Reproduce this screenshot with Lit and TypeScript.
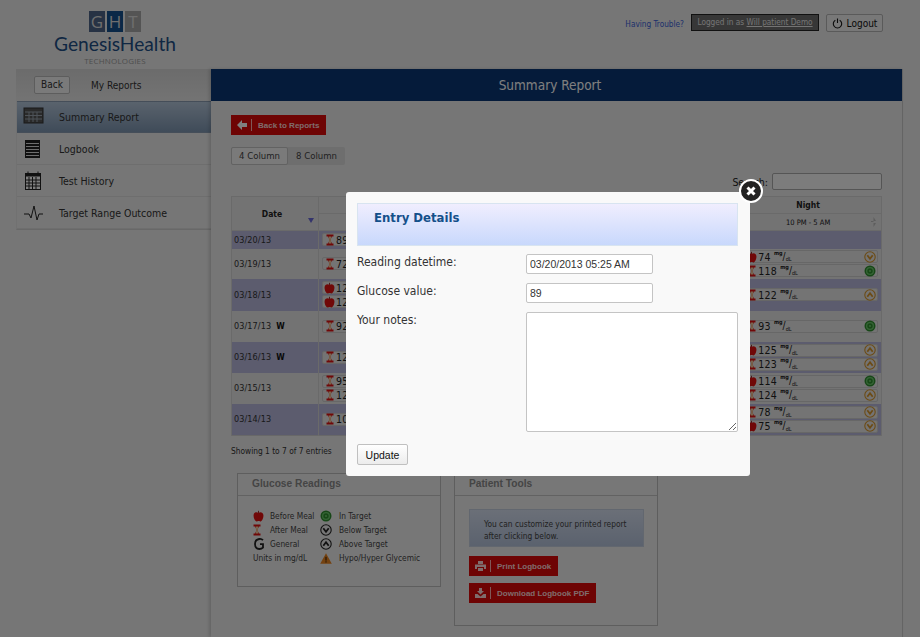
import { LitElement, html, svg, css } from 'lit';
import { customElement } from 'lit/decorators.js';

type Reading = [string, string, string?];
interface Row {
  date: string;
  flag?: string;
  h: number;
  first: Reading[];
  night: Reading[];
}

const ROWS: Row[] = [
  { date: '03/20/13', h: 18, first: [['after', '89']], night: [] },
  { date: '03/19/13', h: 30, first: [['after', '72']], night: [['before', '74', 'below'], ['after', '118', 'in']] },
  { date: '03/18/13', h: 32, first: [['before', '124'], ['before', '121']], night: [['after', '122', 'above']] },
  { date: '03/17/13', flag: 'W', h: 31, first: [['after', '92']], night: [['after', '93', 'in']] },
  { date: '03/16/13', flag: 'W', h: 31, first: [['after', '123']], night: [['before', '125', 'above'], ['after', '123', 'above']] },
  { date: '03/15/13', h: 31, first: [['after', '95'], ['after', '124']], night: [['before', '114', 'in'], ['after', '124', 'above']] },
  { date: '03/14/13', h: 32, first: [['after', '102']], night: [['after', '78', 'below'], ['before', '75', 'below']] },
];

const apple = () => svg`<svg width="11" height="12" viewBox="0 0 11 12"><path d="M5.500 3C4 1.800 1 2 .6 5c-.3 3 1.600 6.500 3.200 6.500.8 0 1.100-.4 1.700-.4s.9.400 1.700.400C8.800 11.500 10.700 8 10.400 5 10 2 7 1.800 5.500 3z" fill="#e01010"/><path d="M5.500 3V.8" stroke="#a03030" stroke-width="1"/></svg>`;
const hourglass = () => svg`<svg width="8" height="12" viewBox="0 0 8 12"><path d="M.5 .5h7v2H6L4.800 5v2L6 9.500h1.500v2h-7v-2H2L3.200 7V5L2 2.500H.5z" fill="#e01010"/><path d="M2.600 2.500h2.800L4.800 5v2l.6 2.500H2.600L3.200 7V5z" fill="#f0cfa0"/></svg>`;
const target = () => svg`<svg width="12" height="12" viewBox="0 0 12 12"><circle cx="6" cy="6" r="5.500" fill="#2f8f2f"/><circle cx="6" cy="6" r="4" fill="#6cc86c"/><circle cx="6" cy="6" r="2.700" fill="#2f8f2f"/><circle cx="6" cy="6" r="1.100" fill="#6cc86c"/></svg>`;
const arrowIcon = (up: boolean, color: string) => svg`<svg width="12" height="12" viewBox="0 0 12 12"><circle cx="6" cy="6" r="5.200" fill="none" stroke=${color} stroke-width="1.100"/><path d=${up ? 'M3.300 7.800L6 4.300l2.700 3.500' : 'M3.300 4.200L6 7.700l2.700-3.500'} fill="none" stroke=${color} stroke-width="1.800"/></svg>`;
const bigG = () => svg`<svg width="12" height="12" viewBox="0 0 12 12"><path d="M10 2.200C8.800 1 7.400.8 6.200 1 3.500 1.400 2 3.400 2 6s1.500 4.800 4.300 5c1.500 0 2.800-.5 3.700-1.300V6.200H7" fill="none" stroke="#222" stroke-width="1.800"/></svg>`;
const warning = () => svg`<svg width="12" height="11" viewBox="0 0 12 11"><path d="M6 .3L11.800 10.700H.2z" fill="#e88420"/><rect x="5.400" y="3.800" width="1.200" height="3.800" fill="#4a2a08"/><rect x="5.400" y="8.300" width="1.200" height="1.200" fill="#4a2a08"/></svg>`;

const statusIcon = (s?: string) =>
  s === 'in' ? target() : s === 'below' ? arrowIcon(false, '#d8962a') : s === 'above' ? arrowIcon(true, '#d8962a') : '';

@customElement('app-root')
export class AppRoot extends LitElement {
  static styles = css`
    :host {
      display: block;
      position: relative;
      width: 920px;
      height: 637px;
      overflow: hidden;
      background: #ececec;
      font-family: 'DejaVu Sans Condensed', 'DejaVu Sans', sans-serif;
      font-stretch: condensed;
      font-size: 10px;
      color: #222;
    }

    .top {
      height: 69px;
      display: flex;
      justify-content: space-between;
    }
    .logo {
      width: 122px;
      margin-left: 54px;
      padding-top: 11px;
      display: flex;
      flex-direction: column;
      align-items: center;
    }
    .letters {
      display: flex;
      gap: 2px;
    }
    .letters span {
      width: 16px;
      height: 21px;
      display: flex;
      align-items: center;
      justify-content: center;
      color: #ddd;
      font: 17px 'Open Sans', sans-serif;
    }
    .letters .g { background: #4f6488; }
    .letters .h { background: #14508f; }
    .letters .t { background: #a9a9a9; }
    .brand {
      font: 19.200px/20px 'Lato', sans-serif;
      color: #214f86;
      margin-top: 2px;
      white-space: nowrap;
    }
    .sub {
      font: 8px/10px 'Open Sans', sans-serif;
      color: #9c9c9c;
      letter-spacing: 0.200px;
      margin-top: 2px;
    }
    .account {
      display: flex;
      align-items: flex-start;
      margin: 14px 37px 0 0;
      font-size: 8.200px;
    }
    .trouble {
      color: #3a62d8;
      margin: 5px 7px 0 0;
    }
    .logged {
      width: 128px;
      height: 17px;
      box-sizing: border-box;
      background: #6e6e6e;
      border: 1px solid #222;
      color: #e8e8e8;
      text-align: center;
      line-height: 15px;
      white-space: nowrap;
    }
    .logout {
      width: 57px;
      height: 18px;
      box-sizing: border-box;
      margin-left: 7px;
      border: 1px solid #b4b4b4;
      border-radius: 2px;
      background: #f0f0f0;
      display: flex;
      align-items: center;
      justify-content: center;
      gap: 4px;
      font-size: 10px;
      color: #111;
    }

    .body {
      display: flex;
      height: 568px;
      padding-left: 16px;
    }
    .side {
      width: 195px;
      flex: none;
    }
    .side-head {
      height: 32px;
      display: flex;
      align-items: center;
      gap: 21px;
      padding-left: 18px;
      box-sizing: border-box;
      background: linear-gradient(#d8d8d8, #e8e8e8);
      font-size: 10px;
      color: #333;
    }
    .back {
      width: 36px;
      height: 18px;
      box-sizing: border-box;
      border: 1px solid #bbb;
      border-radius: 2px;
      background: #f4f4f4;
      text-align: center;
      line-height: 16px;
    }
    .item {
      height: 32px;
      box-sizing: border-box;
      display: flex;
      align-items: center;
      padding: 1px 0 0 6px;
      border-bottom: 1px solid #dcdcdc;
      font-size: 10.500px;
      color: #333;
    }
    .item .ico {
      width: 34px;
      height: 22px;
      margin-right: 2px;
      flex: none;
    }
    .item.active {
      padding-top: 0;
      background: linear-gradient(#b4c6da, #7f97b2);
      border-bottom: 1px solid #8b9db2;
      border-top: 1px solid #8b9db2;
    }
    .side-list {
      border-bottom: 1px solid #d0d0d0;
      border-left: 1px solid #e2e2e2;
    }

    .main {
      width: 692px;
      flex: none;
      box-sizing: border-box;
      border-right: 1px solid #c8c8c8;
      box-shadow: -2px 0 3px rgba(0, 0, 0, 0.15);
    }
    .banner {
      height: 32px;
      box-sizing: border-box;
      padding-right: 13px;
      background: #0a3674;
      color: #fff;
      font-size: 13.500px;
      text-align: center;
      line-height: 32px;
    }
    .content {
      padding: 14px 20px 0 20px;
    }
    .red {
      display: inline-flex;
      align-items: center;
      height: 20px;
      background: #dd0808;
      color: #ffd8d8;
      font: bold 8px 'Liberation Sans', sans-serif;
    }
    .red svg { margin: 0 4px 0 6px; }
    .red i {
      width: 1px;
      height: 12px;
      background: #ffb0b0;
      margin-right: 6px;
    }
    .red b { padding-right: 7px; }
    .seg {
      display: flex;
      margin-top: 12px;
      width: 114px;
      height: 18px;
      background: #dcdcdc;
      border-radius: 2px;
      font-size: 9.500px;
      line-height: 18px;
      color: #444;
    }
    .seg span { flex: 1; text-align: center; }
    .seg .on {
      background: #f4f4f4;
      border: 1px solid #c4c4c4;
      border-radius: 2px;
      box-sizing: border-box;
      line-height: 16px;
      flex: none;
      width: 57px;
    }
    .search {
      display: flex;
      justify-content: flex-end;
      align-items: center;
      gap: 4px;
      margin: 8px 0 6px 0;
      font-size: 10.500px;
    }
    .search input {
      width: 110px;
      height: 17px;
      box-sizing: border-box;
      border: 1px solid #aaa;
      border-radius: 2px;
      background: #f8f8f8;
      margin: 0;
    }

    table {
      width: 651px;
      border-collapse: collapse;
      table-layout: fixed;
      border: 1px solid #d0d0d0;
      font-size: 8.500px;
    }
    th {
      background: #e6e6e6;
      border: 1px solid #d4d4d4;
      height: 16px;
      padding: 0 6px 0 0;
      font-weight: bold;
      position: relative;
    }
    th.time { font-weight: normal; font-size: 7.500px; }
    .sort-down {
      position: absolute;
      right: 4px;
      bottom: 7px;
      width: 0;
      height: 0;
      border: 3px solid transparent;
      border-top: 5px solid #6868d8;
      border-bottom: 0;
    }
    .sort-both {
      position: absolute;
      right: 5px;
      top: 3px;
      width: 5px;
      height: 10px;
      background: linear-gradient(#bbb 45%, transparent 45%, transparent 55%, #bbb 55%);
      clip-path: polygon(50% 0, 100% 40%, 0 40%, 0 60%, 100% 60%, 50% 100%);
    }
    td {
      padding: 0;
      border-left: 1px solid #d4d4d4;
      border-right: 1px solid #d4d4d4;
      vertical-align: middle;
    }
    tr.odd td { background: #b8b8dc; }
    tr.even td { background: #e6e6e6; }
    .date {
      font-size: 9px;
      padding-left: 2px;
      color: #333;
      letter-spacing: 0.100px;
    }
    .date b { margin-left: 5px; font-size: 8.500px; color: #111; }
    .pill {
      display: flex;
      align-items: center;
      height: 13px;
      margin: 1px 3px;
      padding-left: 1px;
      padding-right: 1px;
      background: #e8e8e8;
      border-radius: 2px;
      border: 1px solid #cfcfcf;
      box-sizing: border-box;
      font-size: 10.500px;
      letter-spacing: 0.300px;
      color: #222;
    }
    .pill .kind {
      width: 11px;
      display: flex;
      justify-content: center;
      margin-right: 1px;
    }
    .pill .unit {
      font-size: 6px;
      line-height: 1;
      margin-left: 3px;
      flex: 1;
      display: flex;
      align-items: center;
      letter-spacing: 0;
    }
    .unit sup { align-self: flex-start; margin-top: -1px; font-size: 5.500px; font-weight: bold; }
    .unit em { font-style: normal; font-size: 10px; }
    .unit sub { align-self: flex-end; margin-bottom: -1px; font-size: 5.500px; }

    .foot {
      margin: 10px 0 17px;
      font-size: 8.300px;
      color: #333;
    }
    .panels {
      display: flex;
      align-items: flex-start;
      gap: 13px;
      margin-left: 6px;
    }
    .panel {
      width: 204px;
      box-sizing: border-box;
      border: 1px solid #bcbcbc;
      background: #efefef;
    }
    .panel h3 {
      margin: 0;
      height: 22px;
      padding-left: 14px;
      box-sizing: border-box;
      border-bottom: 1px solid #c4c4c4;
      font: bold 10.200px/20px 'Liberation Sans', sans-serif;
      color: #8a8a8a;
    }
    .legend {
      display: grid;
      grid-template-columns: 17px 50px 19px auto;
      grid-auto-rows: 14px;
      align-items: center;
      padding: 13px 0 22px 15px;
      height: 90px;
      box-sizing: border-box;
      font-size: 8.300px;
      color: #444;
      white-space: nowrap;
    }
    .legend .units { grid-column: span 2; }
    .legend > svg { justify-self: start; }
    .tools {
      padding: 13px 14px 21px;
      height: 129px;
      box-sizing: border-box;
    }
    .note {
      width: 175px;
      height: 38px;
      box-sizing: border-box;
      padding: 8px 14px;
      background: linear-gradient(#d6dff0, #b6c4dc);
      border: 1px solid #c4cede;
      font-size: 8.300px;
      line-height: 12px;
      color: #444;
      margin-bottom: 9px;
    }
    .tools .red { display: flex; width: fit-content; margin-bottom: 7px; }

    .overlay {
      position: absolute;
      inset: 0;
      background: rgba(0, 0, 0, 0.5);
    }
    .modal {
      position: absolute;
      left: 346px;
      top: 192px;
      width: 404px;
      height: 284px;
      box-sizing: border-box;
      padding: 11px 12px 0 11px;
      background: #f9f9f9;
      border-radius: 3px;
      color: #333;
      font-size: 12px;
    }
    .modal-head {
      height: 43px;
      box-sizing: border-box;
      border: 1px solid #d8e4f0;
      background: linear-gradient(#f0eefe, #c8d8fc);
      padding: 6px 0 0 16px;
      color: #14508a;
      font-size: 13px;
      font-weight: bold;
    }
    .fields {
      display: grid;
      grid-template-columns: 169px 1fr;
      row-gap: 9px;
      margin-top: 8px;
    }
    .fields label { line-height: 16px; }
    .fields input {
      width: 127px;
      height: 20px;
      box-sizing: border-box;
      margin: 0;
      padding: 0 3px;
      border: 1px solid #c4c4c4;
      border-radius: 2px;
      background: #fff;
      font: 10.500px 'Liberation Sans', sans-serif;
      color: #333;
    }
    .fields textarea {
      width: 212px;
      height: 120px;
      box-sizing: border-box;
      margin: 0;
      display: block;
      border: 1px solid #c4c4c4;
      border-radius: 2px;
      background: #fff;
    }
    .update {
      display: block;
      margin-top: 12px;
      width: 51px;
      height: 21px;
      box-sizing: border-box;
      padding: 0;
      border: 1px solid #c0c0c0;
      border-radius: 2px;
      background: linear-gradient(#fff, #ececec);
      font: 10.500px 'Liberation Sans', sans-serif;
      color: #111;
    }
    .close {
      position: absolute;
      left: 739px;
      top: 179px;
      width: 24px;
      height: 24px;
    }
  `;

  private pill(r: Reading, unit: boolean) {
    return html`<div class="pill">
      <span class="kind">${r[0] === 'before' ? apple() : hourglass()}</span>${r[1]}
      ${unit ? html`<span class="unit"><sup>mg</sup><em>/</em><sub>dL</sub></span>${statusIcon(r[2])}` : ''}
    </div>`;
  }

  render() {
    return html`
      <div class="top">
        <div class="logo">
          <div class="letters"><span class="g">G</span><span class="h">H</span><span class="t">T</span></div>
          <div class="brand">GenesisHealth</div>
          <div class="sub">TECHNOLOGIES</div>
        </div>
        <div class="account">
          <span class="trouble">Having Trouble?</span>
          <div class="logged">Logged in as <u>Will patient Demo</u></div>
          <div class="logout">
            <svg width="11" height="11" viewBox="0 0 11 11"><path d="M3.300 2.200a4.200 4.200 0 1 0 4.400 0M5.500 .5v4.500" fill="none" stroke="#111" stroke-width="1.100"/></svg>
            Logout
          </div>
        </div>
      </div>
      <div class="body">
        <div class="side">
          <div class="side-head"><span class="back">Back</span><span>My Reports</span></div>
          <div class="side-list">
            <div class="item active">
              <svg class="ico" viewBox="0 0 34 22"><rect x="1" y="2" width="19" height="15" fill="#555" stroke="#333"/><path d="M2 6h17M2 9.500h17M2 13h17M6 6v10M10 6v10M14 6v10" stroke="#9aa4b0" stroke-width="1"/></svg>
              Summary Report
            </div>
            <div class="item">
              <svg class="ico" viewBox="0 0 34 22"><rect x="2" y="2" width="15" height="18" fill="#222"/><path d="M3 5.500h13M3 8.500h13M3 11.500h13M3 14.500h13M3 17.500h13" stroke="#ddd" stroke-width="1"/></svg>
              Logbook
            </div>
            <div class="item">
              <svg class="ico" viewBox="0 0 34 22"><rect x="2.500" y="3.500" width="15" height="16" fill="#fff" stroke="#222"/><rect x="2.500" y="3.500" width="15" height="3" fill="#222"/><path d="M5 1.500v3M15 1.500v3M3 10h14M3 13h14M3 16h14M6 7v12M9.500 7v12M13 7v12" stroke="#222" stroke-width="1"/></svg>
              Test History
            </div>
            <div class="item">
              <svg class="ico" viewBox="0 0 34 22"><path d="M1 12h5l2 4 3-12 3 14 2-6h4" fill="none" stroke="#222" stroke-width="1"/></svg>
              Target Range Outcome
            </div>
          </div>
        </div>
        <div class="main">
          <div class="banner">Summary Report</div>
          <div class="content">
            <div class="red">
              <svg width="10" height="10" viewBox="0 0 10 10"><path d="M5 0L0 5l5 5V7h5V3H5z" fill="#fff"/></svg>
              <i></i><b>Back to Reports</b>
            </div>
            <div class="seg"><span class="on">4 Column</span><span>8 Column</span></div>
            <div class="search"><span>Search:</span><input /></div>
            <table>
              <colgroup><col style="width:87px" /><col /><col /><col /><col /></colgroup>
              <thead>
                <tr>
                  <th rowspan="2">Date<span class="sort-down"></span></th>
                  <th></th><th></th><th></th>
                  <th>Night</th>
                </tr>
                <tr>
                  <th></th><th></th><th></th>
                  <th class="time">10 PM - 5 AM<span class="sort-both"></span></th>
                </tr>
              </thead>
              <tbody>
                ${ROWS.map(
                  (r, i) => html`<tr class=${i % 2 ? 'even' : 'odd'} style="height:${r.h}px">
                    <td class="date">${r.date}${r.flag ? html`<b>${r.flag}</b>` : ''}</td>
                    <td>${r.first.map((x) => this.pill(x, false))}</td>
                    <td></td>
                    <td></td>
                    <td>${r.night.map((x) => this.pill(x, true))}</td>
                  </tr>`,
                )}
              </tbody>
            </table>
            <div class="foot">Showing 1 to 7 of 7 entries</div>
            <div class="panels">
              <div class="panel">
                <h3>Glucose Readings</h3>
                <div class="legend">
                  ${apple()}<span>Before Meal</span>${target()}<span>In Target</span>
                  ${hourglass()}<span>After Meal</span>${arrowIcon(false, '#222')}<span>Below Target</span>
                  ${bigG()}<span>General</span>${arrowIcon(true, '#222')}<span>Above Target</span>
                  <span class="units">Units in mg/dL</span>${warning()}<span>Hypo/Hyper Glycemic</span>
                </div>
              </div>
              <div class="panel">
                <h3>Patient Tools</h3>
                <div class="tools">
                  <div class="note">You can customize your printed report after clicking below.</div>
                  <div class="red">
                    <svg width="11" height="10" viewBox="0 0 11 10"><path d="M3 0h5v3H3zM0 3.500h11V8H9V6H2v2H0zM3 7h5v3H3z" fill="#ffd8d8"/></svg>
                    <i></i><b>Print Logbook</b>
                  </div>
                  <div class="red">
                    <svg width="11" height="10" viewBox="0 0 11 10"><path d="M4 0h3v3h2L5.500 6.500 2 3h2zM0 6h2.500l3 2.500 3-2.500H11v4H0z" fill="#ffd8d8"/></svg>
                    <i></i><b>Download Logbook PDF</b>
                  </div>
                </div>
              </div>
            </div>
          </div>
        </div>
      </div>
      <div class="overlay"></div>
      <div class="modal">
        <div class="modal-head">Entry Details</div>
        <div class="fields">
          <label>Reading datetime:</label><input value="03/20/2013 05:25 AM" />
          <label>Glucose value:</label><input value="89" />
          <label>Your notes:</label><textarea></textarea>
        </div>
        <button class="update">Update</button>
      </div>
      <svg class="close" viewBox="0 0 24 24">
        <circle cx="12" cy="12" r="11" fill="#222" stroke="#fff" stroke-width="2"/>
        <path d="M8.500 8.500l7 7M15.500 8.500l-7 7" stroke="#fff" stroke-width="3"/>
      </svg>
    `;
  }
}
